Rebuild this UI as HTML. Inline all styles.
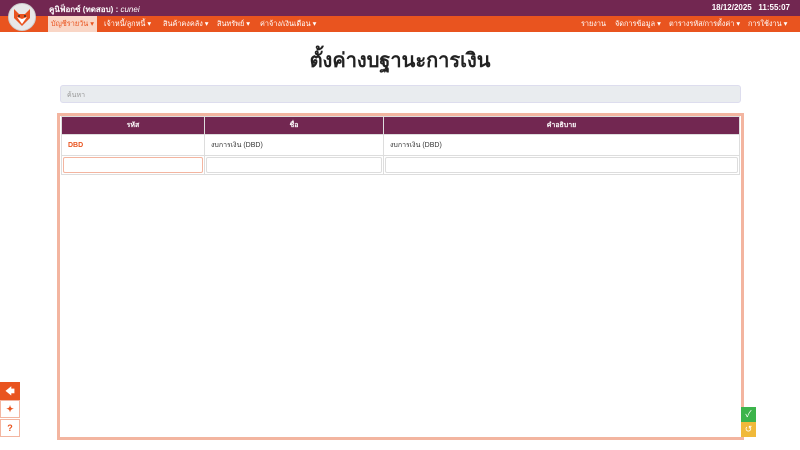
<!DOCTYPE html>
<html><head><meta charset="utf-8"><style>
*{box-sizing:border-box;margin:0;padding:0}
body{width:800px;height:450px;background:#fff;font-family:"Liberation Sans","Noto Sans CJK SC",sans-serif;position:relative;overflow:hidden;font-size:8px}
.top{position:absolute;left:0;top:0;width:800px;height:16px;background:#722751;color:#fff}
.nav{position:absolute;left:0;top:16px;width:800px;height:16px;background:#e9541f;color:#fff}
.logo{position:absolute;left:8px;top:3px;width:28px;height:28px;border-radius:50%;background:#e8e8e8;border:1px solid #ccc}
.top .name{position:absolute;left:49px;top:3px;font-size:8px;font-weight:bold}
.top .name i{font-weight:normal}
.top .dt{position:absolute;right:10px;top:3px;font-weight:bold;font-size:8px}
.nav span{position:absolute;top:3px;font-size:7.3px;white-space:nowrap}
.nav .act{background:#f9d6c6;color:#e9541f;top:0;height:16px;padding:3px 3px;left:48px}
h1{position:absolute;left:0;width:800px;top:44px;text-align:center;font-size:20px;font-weight:bold;color:#222}
.search{position:absolute;left:60px;top:85px;width:681px;height:18px;background:#e9ecef;border:1px solid #dde;border-radius:3px;color:#999;font-size:7px;padding:4px 6px}
.frame{position:absolute;left:57px;top:113px;width:687px;height:327px;border:3px solid #f3b5a0}
table{position:absolute;left:1px;top:0;width:679px;border-collapse:collapse}
th{background:#722751;color:#fff;height:18px;font-size:7px;border:1px solid #ddd}
td{height:21px;border:1px solid #ddd;font-size:7px;padding:0 6px;color:#333}
.in{height:18px;padding:1px}
.in div{height:16px;border:1px solid #ddd;border-radius:2px}
.lb{position:absolute;left:0;width:20px;height:18px;border:1px solid #f3b5a0;color:#e9541f;text-align:center;font-size:9px;font-weight:bold;line-height:17px;background:#fff}
.rb{position:absolute;left:741px;width:15px;height:15px;color:#fff;text-align:center;font-size:9px;line-height:15px}
</style></head><body>
<div class="top"><div class="name">คูนิฟ็อกซ์ (ทดสอบ) : <i>cunei</i></div><div class="dt">18/12/2025&nbsp;&nbsp;&nbsp;11:55:07</div></div>
<div class="nav">
<span class="act">บัญชีรายวัน ▾</span>
<span style="left:104px">เจ้าหนี้/ลูกหนี้ ▾</span>
<span style="left:163px">สินค้าคงคลัง ▾</span>
<span style="left:217px">สินทรัพย์ ▾</span>
<span style="left:260px">ค่าจ้าง/เงินเดือน ▾</span>
<span style="left:581px">รายงาน</span>
<span style="left:615px">จัดการข้อมูล ▾</span>
<span style="left:669px">ตารางรหัส/การตั้งค่า ▾</span>
<span style="left:748px">การใช้งาน ▾</span>
</div>
<div class="logo"><svg width="26" height="26" viewBox="0 0 26 26"><path d="M5 5 L10 10 L16 10 L21 5 L21 14 L13 22 L5 14Z" fill="#e9541f"/><path d="M8 13 L13 20 L18 13 L13 15Z" fill="#fff"/><circle cx="10" cy="12" r="1" fill="#333"/><circle cx="16" cy="12" r="1" fill="#333"/></svg></div>
<h1>ตั้งค่างบฐานะการเงิน</h1>
<div class="search">ค้นหา</div>
<div class="frame"><table>
<tr><th style="width:143px">รหัส</th><th style="width:179px">ชื่อ</th><th>คำอธิบาย</th></tr>
<tr><td style="color:#e9541f;font-weight:bold">DBD</td><td>งบการเงิน (DBD)</td><td>งบการเงิน (DBD)</td></tr>
<tr><td class="in"><div style="border-color:#f3b5a0"></div></td><td class="in"><div></div></td><td class="in"><div></div></td></tr>
</table></div>
<div class="lb" style="top:382px;background:#e9541f;color:#fff;border-color:#e9541f">🡄</div>
<div class="lb" style="top:400px">✦</div>
<div class="lb" style="top:419px">?</div>
<div class="rb" style="top:407px;background:#3cb44b">✓</div>
<div class="rb" style="top:422px;background:#f0b93a">↺</div>
</body></html>
